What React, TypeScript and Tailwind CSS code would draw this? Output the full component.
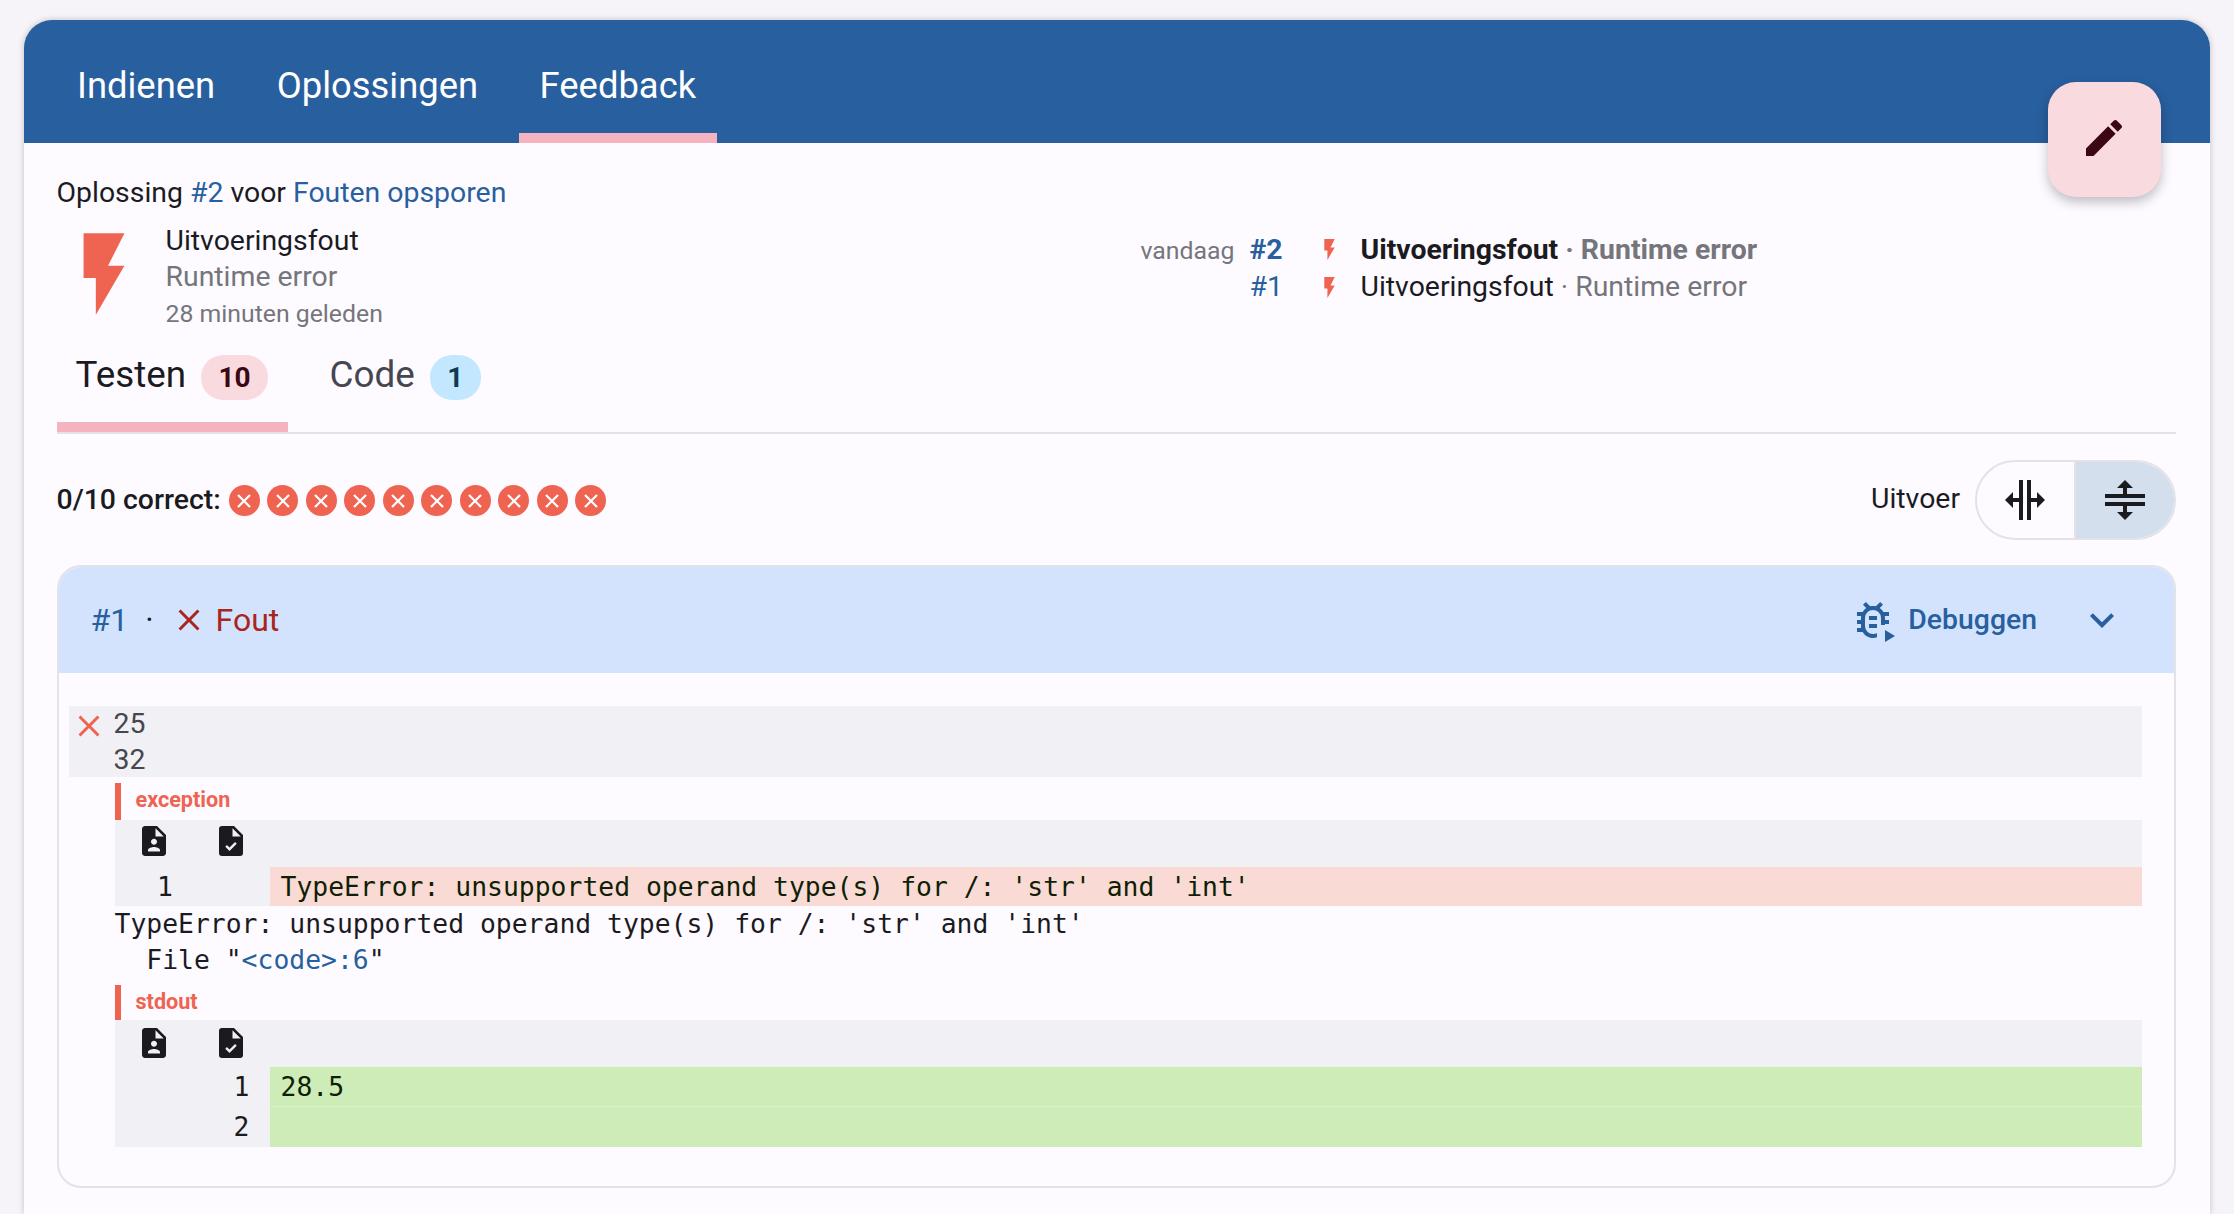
function Mdi({ d, size, className }: { d: string; size: number; className?: string }) {
  return (
    <svg viewBox="0 0 24 24" width={size} height={size} className={className} fill="currentColor" fillRule="evenodd">
      <path d={d} />
    </svg>
  );
}

const flash = "M7,2V13H10V22L17,10H13L17,2H7Z";
const close = "M19,6.41L17.59,5L12,10.59L6.41,5L5,6.41L10.59,12L5,17.59L6.41,19L12,13.41L17.59,19L19,17.59L13.41,12L19,6.41Z";
const pencil = "M20.71,7.04C21.1,6.65 21.1,6 20.71,5.63L18.37,3.29C18,2.9 17.35,2.9 16.96,3.29L15.12,5.12L18.87,8.87M3,17.25V21H6.75L17.81,9.93L14.06,6.18L3,17.25Z";
const splitV = "M18,16V13H15V22H13V2H15V11H18V8L22,12L18,16M2,12L6,16V13H9V22H11V2H9V11H6V8L2,12Z";
const splitH = "M8,18H11V15H2V13H22V15H13V18H16L12,22L8,18M12,2L8,6H11V9H2V11H22V9H13V6H16L12,2Z";
const chevron = "M7.41,8.58L12,13.17L16.59,8.58L18,10L12,16L6,10L7.41,8.58Z";
const fileAccount = "M14,2H6C4.9,2 4,2.9 4,4V20C4,21.1 4.9,22 6,22H18C19.1,22 20,21.1 20,20V8L14,2M12,10.5C13.1,10.5 14,11.4 14,12.5C14,13.6 13.1,14.5 12,14.5C10.9,14.5 10,13.6 10,12.5C10,11.4 10.9,10.5 12,10.5M16,18V19H8V18C8,16.67 10.67,16 12,16C13.33,16 16,16.67 16,18M13,9V3.5L18.5,9H13Z";
const fileCheck = "M14,2H6A2,2 0 0,0 4,4V20A2,2 0 0,0 6,22H18A2,2 0 0,0 20,20V8L14,2M11,18.6L8.2,15.8L9.3,14.7L11,16.4L14.7,12.7L15.8,13.8L11,18.6M13,9V3.5L18.5,9H13Z";

function BugPlay() {
  return (
    <svg viewBox="0 0 24 24" width={48} height={48} fill="currentColor">
      <path
        fillRule="evenodd"
        d="M14,12H10V10H14V12M14,16H10V14H14V16M20,8H17.19C16.74,7.22 16.12,6.55 15.37,6.04L17,4.41L15.59,3L13.42,5.17C12.96,5.06 12.5,5 12,5C11.5,5 11.04,5.06 10.59,5.17L8.41,3L7,4.41L8.62,6.04C7.88,6.55 7.26,7.22 6.81,8H4V10H6.09C6.04,10.33 6,10.66 6,11V12H4V14H6V15C6,15.34 6.04,15.67 6.09,16H4V18H6.81C7.85,19.79 9.78,21 12,21C12.7,21 13.4,20.9 14,20.6V18.6C13.4,18.9 12.7,19 12,19A4,4 0 0,1 8,15V11A4,4 0 0,1 12,7A4,4 0 0,1 16,11V14.5H18V14H20V12H18V11C18,10.66 17.96,10.33 17.91,10H20V8Z"
      />
      <path d="M18,17V23L23,20L18,17Z" />
    </svg>
  );
}

function DiffIcons({ className }: { className: string }) {
  return (
    <div className={"flex h-[47px] pl-[21px] gap-[41px] text-[#1b1b1f] " + className}>
      <Mdi d={fileAccount} size={36} />
      <Mdi d={fileCheck} size={36} />
    </div>
  );
}

export default function App() {
  return (
    <div className="min-h-[1214px] bg-[#f6f4f9] pr-6 pl-[23.5px] pt-5 font-['Roboto',sans-serif] text-[28.4px] text-[#1b1b1f]">
      <div className="relative h-[1194px] rounded-t-[28px] bg-[#fdfbff] shadow-[0_0_6px_rgba(0,0,0,0.22)]">
        <nav className="flex h-[123px] gap-[19.5px] rounded-t-[28px] bg-[#285f9e] px-[32.5px] pt-[38px] text-[36.4px] text-white">
          <div className="h-[85px] px-[21px] leading-[56px]">Indienen</div>
          <div className="h-[85px] px-[21px] leading-[56px]">Oplossingen</div>
          <div className="h-[85px] border-b-[10px] border-[#f4b3bf] px-[21px] leading-[56px]">Feedback</div>
        </nav>

        <button className="absolute top-[62px] right-[49px] flex h-[115px] w-[113px] items-center justify-center rounded-[28px] bg-[#f9dbdf] text-[#3b0715] shadow-[0_5px_12px_rgba(0,0,0,0.25)]">
          <Mdi d={pencil} size={48} className="mr-[2px] mb-[4px]" />
        </button>

        <main className="pr-[34px] pl-[33px]">
          <p className="mt-[29px] leading-[42px]">
            Oplossing <span className="text-[#285f9e]">#2</span> voor <span className="text-[#285f9e]">Fouten opsporen</span>
          </p>

          <div className="flex h-[130px]">
            <div className="flex w-[1084px]">
              <div className="w-[109px] text-[#ef6351]">
                <Mdi d={flash} size={98} className="mt-[11px] ml-[-2px]" />
              </div>
              <div className="pt-[9px]">
                <div className="leading-[36px]">Uitvoeringsfout</div>
                <div className="leading-[36px] text-[#75757c]">Runtime error</div>
                <div className="text-[24.8px] leading-[38px] text-[#75757c]">28 minuten geleden</div>
              </div>
            </div>
            <div className="grid grid-cols-[109px_67px_44px_auto] content-start pt-[18px] leading-[36px]">
              <div className="pt-[1px] text-[24.8px] text-[#75757c]">vandaag</div>
              <div className="font-bold text-[#285f9e]">#2</div>
              <div className="pt-[5px] text-[#ef6351]"><Mdi d={flash} size={25} /></div>
              <div className="font-bold">Uitvoeringsfout <span className="text-[#75757c]">· Runtime error</span></div>
              <div />
              <div className="text-[#285f9e]">#1</div>
              <div className="pt-[6px] text-[#ef6351]"><Mdi d={flash} size={25} /></div>
              <div>Uitvoeringsfout <span className="text-[#75757c]">· Runtime error</span></div>
            </div>
          </div>

          <div className="flex h-[90px] border-b-2 border-[#e3e2e6] text-[36.8px]">
            <div className="flex h-[88px] w-[231px] items-start gap-[15px] border-b-[10px] border-[#f4b3bf] pl-[19px] pt-[6px]">
              <span className="leading-[50px]">Testen</span>
              <span className="mt-[5px] flex h-[45px] w-[67px] items-center justify-center rounded-[22px] bg-[#f9dbdf] text-[28px] font-bold text-[#3b0715]">10</span>
            </div>
            <div className="flex items-start gap-[15px] pl-[42px] pt-[6px] text-[#46464f]">
              <span className="leading-[50px]">Code</span>
              <span className="mt-[5px] flex h-[45px] w-[51px] items-center justify-center rounded-[22px] bg-[#c2e7ff] text-[28px] font-bold text-[#0f3a50]">1</span>
            </div>
          </div>

          <div className="flex h-[131px] items-center justify-between">
            <div className="flex items-center">
              <span className="mt-[1px] font-medium">0/10 correct:</span>
              <div className="mt-[3px] ml-[8px] flex gap-[7.5px]">
                {Array.from({ length: 10 }).map((_, i) => (
                  <span key={i} className="flex h-[31px] w-[31px] items-center justify-center rounded-full bg-[#ef6351] text-white">
                    <svg viewBox="0 0 24 24" width={16} height={16} stroke="currentColor" strokeWidth={3.4} fill="none">
                      <path d="M3,3L21,21M21,3L3,21" />
                    </svg>
                  </span>
                ))}
              </div>
            </div>
            <div className="flex items-center">
              <span className="mr-[15px]">Uitvoer</span>
              <div className="flex h-[80px] w-[201px] overflow-hidden rounded-full border-2 border-[#e3e2e6]">
                <div className="flex w-[99px] items-center justify-center border-r-2 border-[#e3e2e6] pr-[2px]">
                  <Mdi d={splitV} size={48} />
                </div>
                <div className="flex flex-1 items-center justify-center bg-[#d4dfed]">
                  <Mdi d={splitH} size={48} />
                </div>
              </div>
            </div>
          </div>

          <section className="h-[623px] overflow-hidden rounded-[24px] border-2 border-[#e3e2e6]">
            <header className="flex h-[106px] items-center bg-[#d3e3fd] pr-[48px] pl-[32px] text-[32px]">
              <span className="text-[#285f9e]">#1</span>
              <span className="ml-[17px] text-[#1b1b1f]">·</span>
              <Mdi d={close} size={36} className="ml-[17px] text-[#a8261c]" />
              <span className="ml-[9px] text-[#a8261c]">Fout</span>
              <div className="ml-auto flex items-center text-[28.4px] text-[#285f9e]">
                <BugPlay />
                <span className="ml-[11px] font-medium">Debuggen</span>
                <Mdi d={chevron} size={48} className="ml-[41px]" />
              </div>
            </header>

            <div className="mt-[33px] mr-[32px] ml-[10px]">
              <div className="flex h-[71px] bg-[#f1f0f4]">
                <Mdi d={close} size={36} className="mt-[2px] ml-[2px] shrink-0 text-[#ef6351]" />
                <div className="ml-[7px] leading-[36px] text-[#46464f]">25<br />32</div>
              </div>

              <div className="mt-[6px] ml-[46px]">
                <div className="h-[37px] border-l-[6px] border-[#ef6351] pl-[15px] text-[21.6px] leading-[34px] font-bold text-[#ef6351]">exception</div>
                <div className="bg-[#f1f0f4] font-['DejaVu_Sans_Mono',monospace] text-[26.4px]">
                  <DiffIcons className="pt-[3px]" />
                  <div className="flex h-[39px] leading-[39px]">
                    <div className="w-[155px] pl-[42.5px]">1</div>
                    <div className="flex-1 bg-[#fadad4] pl-[11px] text-[#0f1f05]">TypeError: unsupported operand type(s) for /: 'str' and 'int'</div>
                  </div>
                </div>
                <div className="font-['DejaVu_Sans_Mono',monospace] text-[26.4px] leading-[36px] whitespace-pre">
                  <div>TypeError: unsupported operand type(s) for /: 'str' and 'int'</div>
                  <div>{'  File "'}<span className="text-[#285f9e]">{"<code>:6"}</span>{'"'}</div>
                </div>
                <div className="mt-[7px] h-[35px] border-l-[6px] border-[#ef6351] pl-[15px] text-[21.6px] leading-[34px] font-bold text-[#ef6351]">stdout</div>
                <div className="bg-[#f1f0f4] font-['DejaVu_Sans_Mono',monospace] text-[26.4px]">
                  <DiffIcons className="pt-[5px]" />
                  <div className="flex h-[40px] leading-[40px]">
                    <div className="w-[155px] pr-[20px] text-right">1</div>
                    <div className="flex-1 border-b border-[#d9f2c8] bg-[#cdecb8] pl-[11px] text-[#0f1f05]">28.5</div>
                  </div>
                  <div className="flex h-[40px] leading-[40px]">
                    <div className="w-[155px] pr-[20px] text-right">2</div>
                    <div className="flex-1 bg-[#cdecb8]" />
                  </div>
                </div>
              </div>
            </div>
          </section>
        </main>
      </div>
    </div>
  );
}
